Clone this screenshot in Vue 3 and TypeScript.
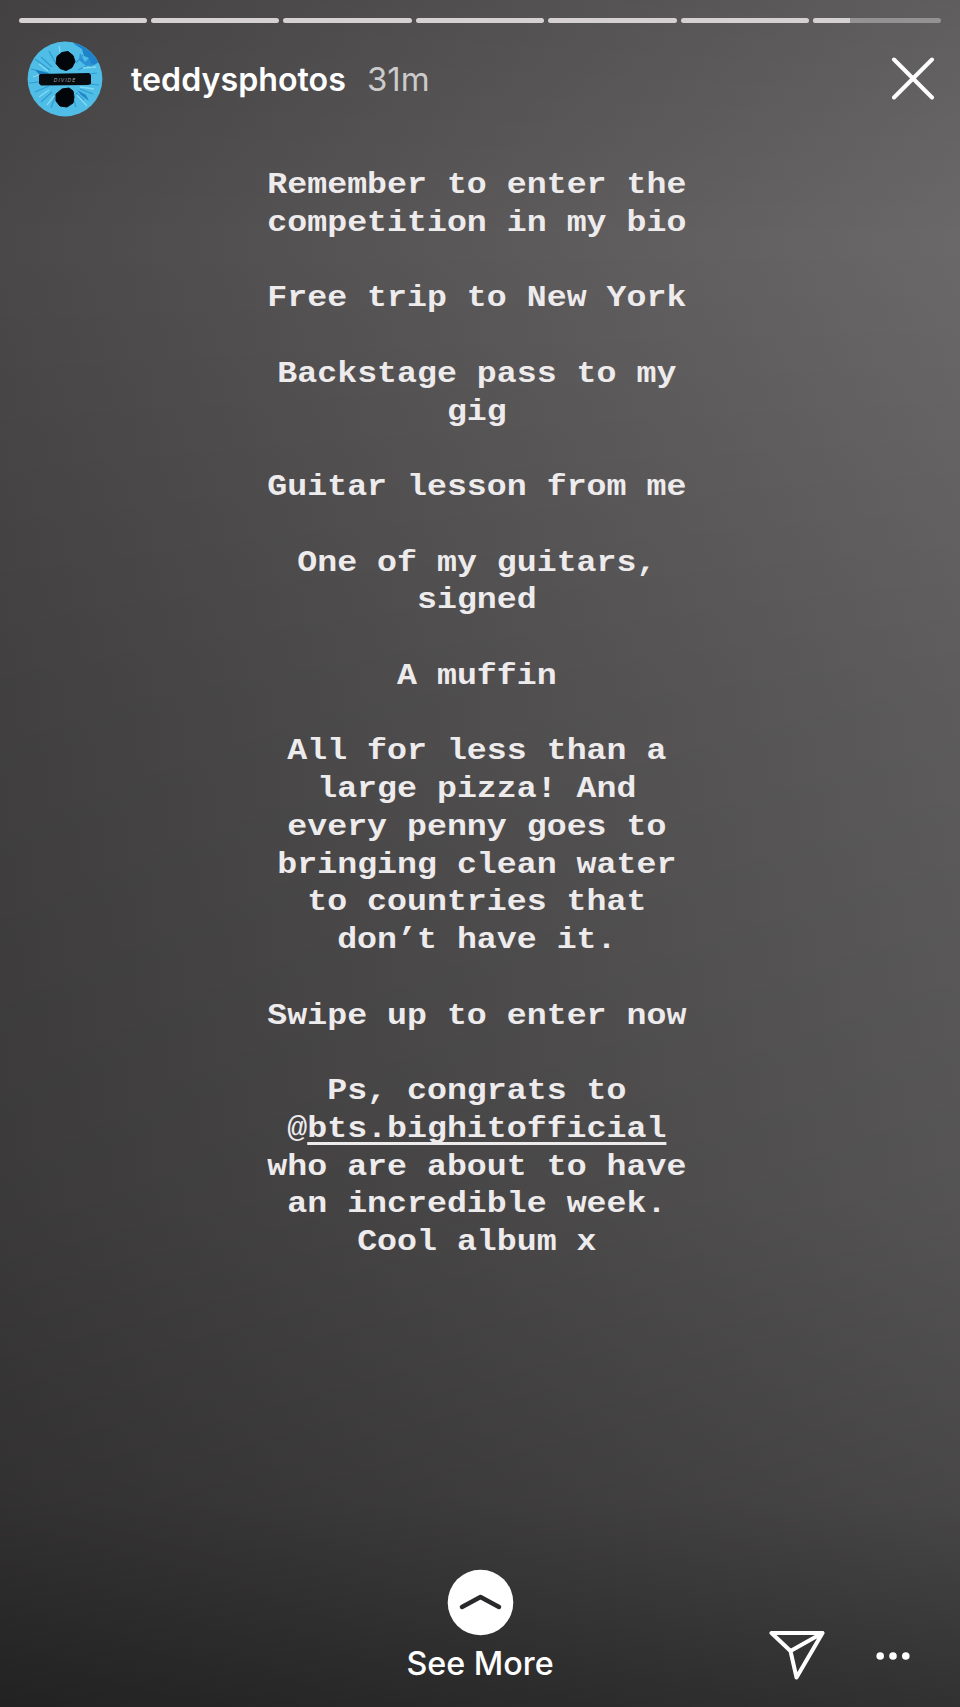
<template>
  <main class="story">
    <div class="story-progress">
      <div v-for="(value, index) in segments" :key="index" class="segment">
        <div class="segment-fill" :style="{ width: value + '%' }"></div>
      </div>
    </div>

    <header class="story-header">
      <svg class="avatar" viewBox="0 0 76 76" aria-hidden="true">
        <defs>
          <clipPath id="avatar-clip"><circle cx="38" cy="38" r="37.4" /></clipPath>
        </defs>
        <g clip-path="url(#avatar-clip)">
          <rect width="76" height="76" fill="#4fbde5" />
          <path d="M47 3l8 5 2 7 5 2-3 6 8 1 5-3 4 9V0H47z" fill="#1f83cb" />
          <path d="M53 12l5 9 4-4 4 9-8-2-6-5z" fill="#2c91d5" />
          <path
            d="M8 18l15 11M14 16l11 10M4 28l17 4M2 42l10-1M8 51l14-6M14 61l11-10M24 67l4-11M49 66l-3-9M57 59l-8-7M66 53l-13-5M72 44l-9-1M70 32l-8 1M22 10l6 11M49 22l7-8M51 29l12-6"
            stroke="#2f9bd5"
            stroke-width="1.2"
          />
          <path
            d="M12 23l9 7M6 36l8-3M12 56l10-7M20 64l7-9M60 65l-10-11M67 48l-14-2M56 27l13-1M32 5l1 6"
            stroke="#84d9f2"
            stroke-width="1.3"
          />
          <path d="M8 29l9 2 7 2-10 2z" fill="#1a7dbf" />
          <path d="M50 49l9 5 3 6-8-6z" fill="#2187c9" />
        </g>
        <path d="M35 11.5l6-1 5 4 2 6-3 6-6 3-6-2-4-5 1-7z" fill="#020509" stroke="#020509" stroke-linejoin="round" />
        <path d="M35 48l7-1 4 3 1 6-1 6-6 4-7-1-4-5v-7z" fill="#020509" stroke="#020509" stroke-linejoin="round" />
        <path d="M13 33l49-1 2 2v9l-3 1-47 .4-2-2v-8z" fill="#070b10" />
        <text x="38" y="40.5" class="avatar-text">DIVIDE</text>
      </svg>
      <span class="username">teddysphotos</span>
      <span class="age">31m</span>
      <button class="icon-button close" aria-label="Close">
        <svg width="44" height="44" viewBox="0 0 44 44">
          <path d="M3 2.5L41 40.5M41 2.5L3 40.5" />
        </svg>
      </button>
    </header>

    <section class="message">
      <p v-for="paragraph in paragraphs" :key="paragraph">{{ paragraph }}</p>
      <p>
        Ps, congrats to<br />
        <span class="at">@</span><span class="mention">bts.bighitofficial</span><br />
        who are about to have<br />
        an incredible week.<br />
        Cool album x
      </p>
    </section>

    <footer class="story-footer">
      <button class="see-more">
        <svg width="68" height="68" viewBox="0 0 68 68">
          <circle cx="34.5" cy="34.5" r="32.8" fill="#fff" />
          <path d="M16 39L34.5 29L53 39" />
        </svg>
        <span>See More</span>
      </button>
      <div class="actions">
        <button class="icon-button" aria-label="Send">
          <svg width="56" height="50" viewBox="0 0 56 50">
            <path d="M2.5 2H53.5L27.5 46.5L21.5 20ZM21.5 20L53.5 2" />
          </svg>
        </button>
        <button class="icon-button more" aria-label="More">
          <svg width="34" height="10" viewBox="0 0 34 10">
            <circle cx="4.2" cy="5" r="3.8" />
            <circle cx="17" cy="5" r="3.8" />
            <circle cx="29.8" cy="5" r="3.8" />
          </svg>
        </button>
      </div>
    </footer>
  </main>
</template>

<script setup lang="ts">
const segments: number[] = [100, 100, 100, 100, 100, 100, 28.7];

const paragraphs: string[] = [
  'Remember to enter the\ncompetition in my bio',
  'Free trip to New York',
  'Backstage pass to my\ngig',
  'Guitar lesson from me',
  'One of my guitars,\nsigned',
  'A muffin',
  'All for less than a\nlarge pizza! And\nevery penny goes to\nbringing clean water\nto countries that\ndon’t have it.',
  'Swipe up to enter now',
];
</script>

<style>
body {
  margin: 0;
  background: #2b2a2b;
}
</style>

<style scoped>
.story {
  display: flex;
  flex-direction: column;
  box-sizing: border-box;
  width: 960px;
  height: 1707px;
  padding-top: 18px;
  overflow: hidden;
  color: #fff;
  font-family: Inter, "Liberation Sans", sans-serif;
  background:
    linear-gradient(180deg, rgba(0, 0, 0, 0.1) 0, rgba(0, 0, 0, 0) 240px, rgba(0, 0, 0, 0.12) 700px, rgba(0, 0, 0, 0.2) 1200px, rgba(0, 0, 0, 0.32) 1500px, rgba(0, 0, 0, 0.53) 1707px),
    linear-gradient(90deg, #4a4849 0%, #5a5859 50%, #6a6869 100%);
}

.story-progress {
  display: flex;
  gap: 4px;
  height: 5px;
  padding: 0 18.5px;
}

.segment {
  flex: 1;
  overflow: hidden;
  border-radius: 3px;
  background: #949293;
}

.segment-fill {
  height: 100%;
  background: #d5d1d3;
}

.story-header {
  display: flex;
  align-items: center;
  height: 76px;
  padding: 18px 25px 0 27px;
}

.avatar {
  width: 76px;
  height: 76px;
}

.avatar-text {
  fill: #a9acae;
  font-size: 5px;
  font-style: italic;
  letter-spacing: 1px;
  text-anchor: middle;
}

.username,
.age {
  margin-left: 28px;
  font-size: 32.2px;
  font-weight: 600;
}

.age {
  margin-left: 21px;
  color: #cccacb;
  font-size: 33px;
  font-weight: 400;
}

button {
  padding: 0;
  border: 0;
  color: inherit;
  font-family: inherit;
  background: none;
}

.icon-button svg {
  display: block;
  fill: none;
  stroke: #fff;
  stroke-width: 4;
  stroke-linecap: round;
  stroke-linejoin: round;
}

.close {
  margin-left: auto;
}

/* Stretched sideways to get the broad typewriter letterforms */
.message {
  display: flex;
  flex-direction: column;
  gap: 37.75px;
  align-items: center;
  padding: 50px 5.5px 0 0;
  color: #eeebed;
  font-family: "Liberation Mono", monospace;
  font-size: 29px;
  font-weight: 700;
  line-height: 37.75px;
  text-align: center;
  transform: scaleX(1.1465);
}

.message p {
  margin: 0;
  white-space: pre-line;
}

.message p:last-child {
  white-space: normal;
}

.at {
  font-weight: 400;
}

.mention {
  text-decoration: underline;
  text-decoration-thickness: 3px;
  text-decoration-skip-ink: none;
  text-underline-offset: 5px;
}

.story-footer {
  display: grid;
  grid-template-columns: 1fr auto 1fr;
  margin-top: auto;
  height: 139px;
}

.see-more {
  display: flex;
  grid-column: 2;
  flex-direction: column;
  gap: 8px;
  align-items: center;
  font-size: 32.3px;
  font-weight: 500;
  line-height: 40px;
}

.see-more path {
  fill: none;
  stroke: #29282a;
  stroke-width: 4.5;
  stroke-linecap: round;
  stroke-linejoin: round;
}

.actions {
  display: flex;
  gap: 51px;
  align-items: center;
  justify-content: flex-end;
  padding: 36px 50px 0 0;
}

.more svg {
  fill: #fff;
  stroke: none;
}
</style>
